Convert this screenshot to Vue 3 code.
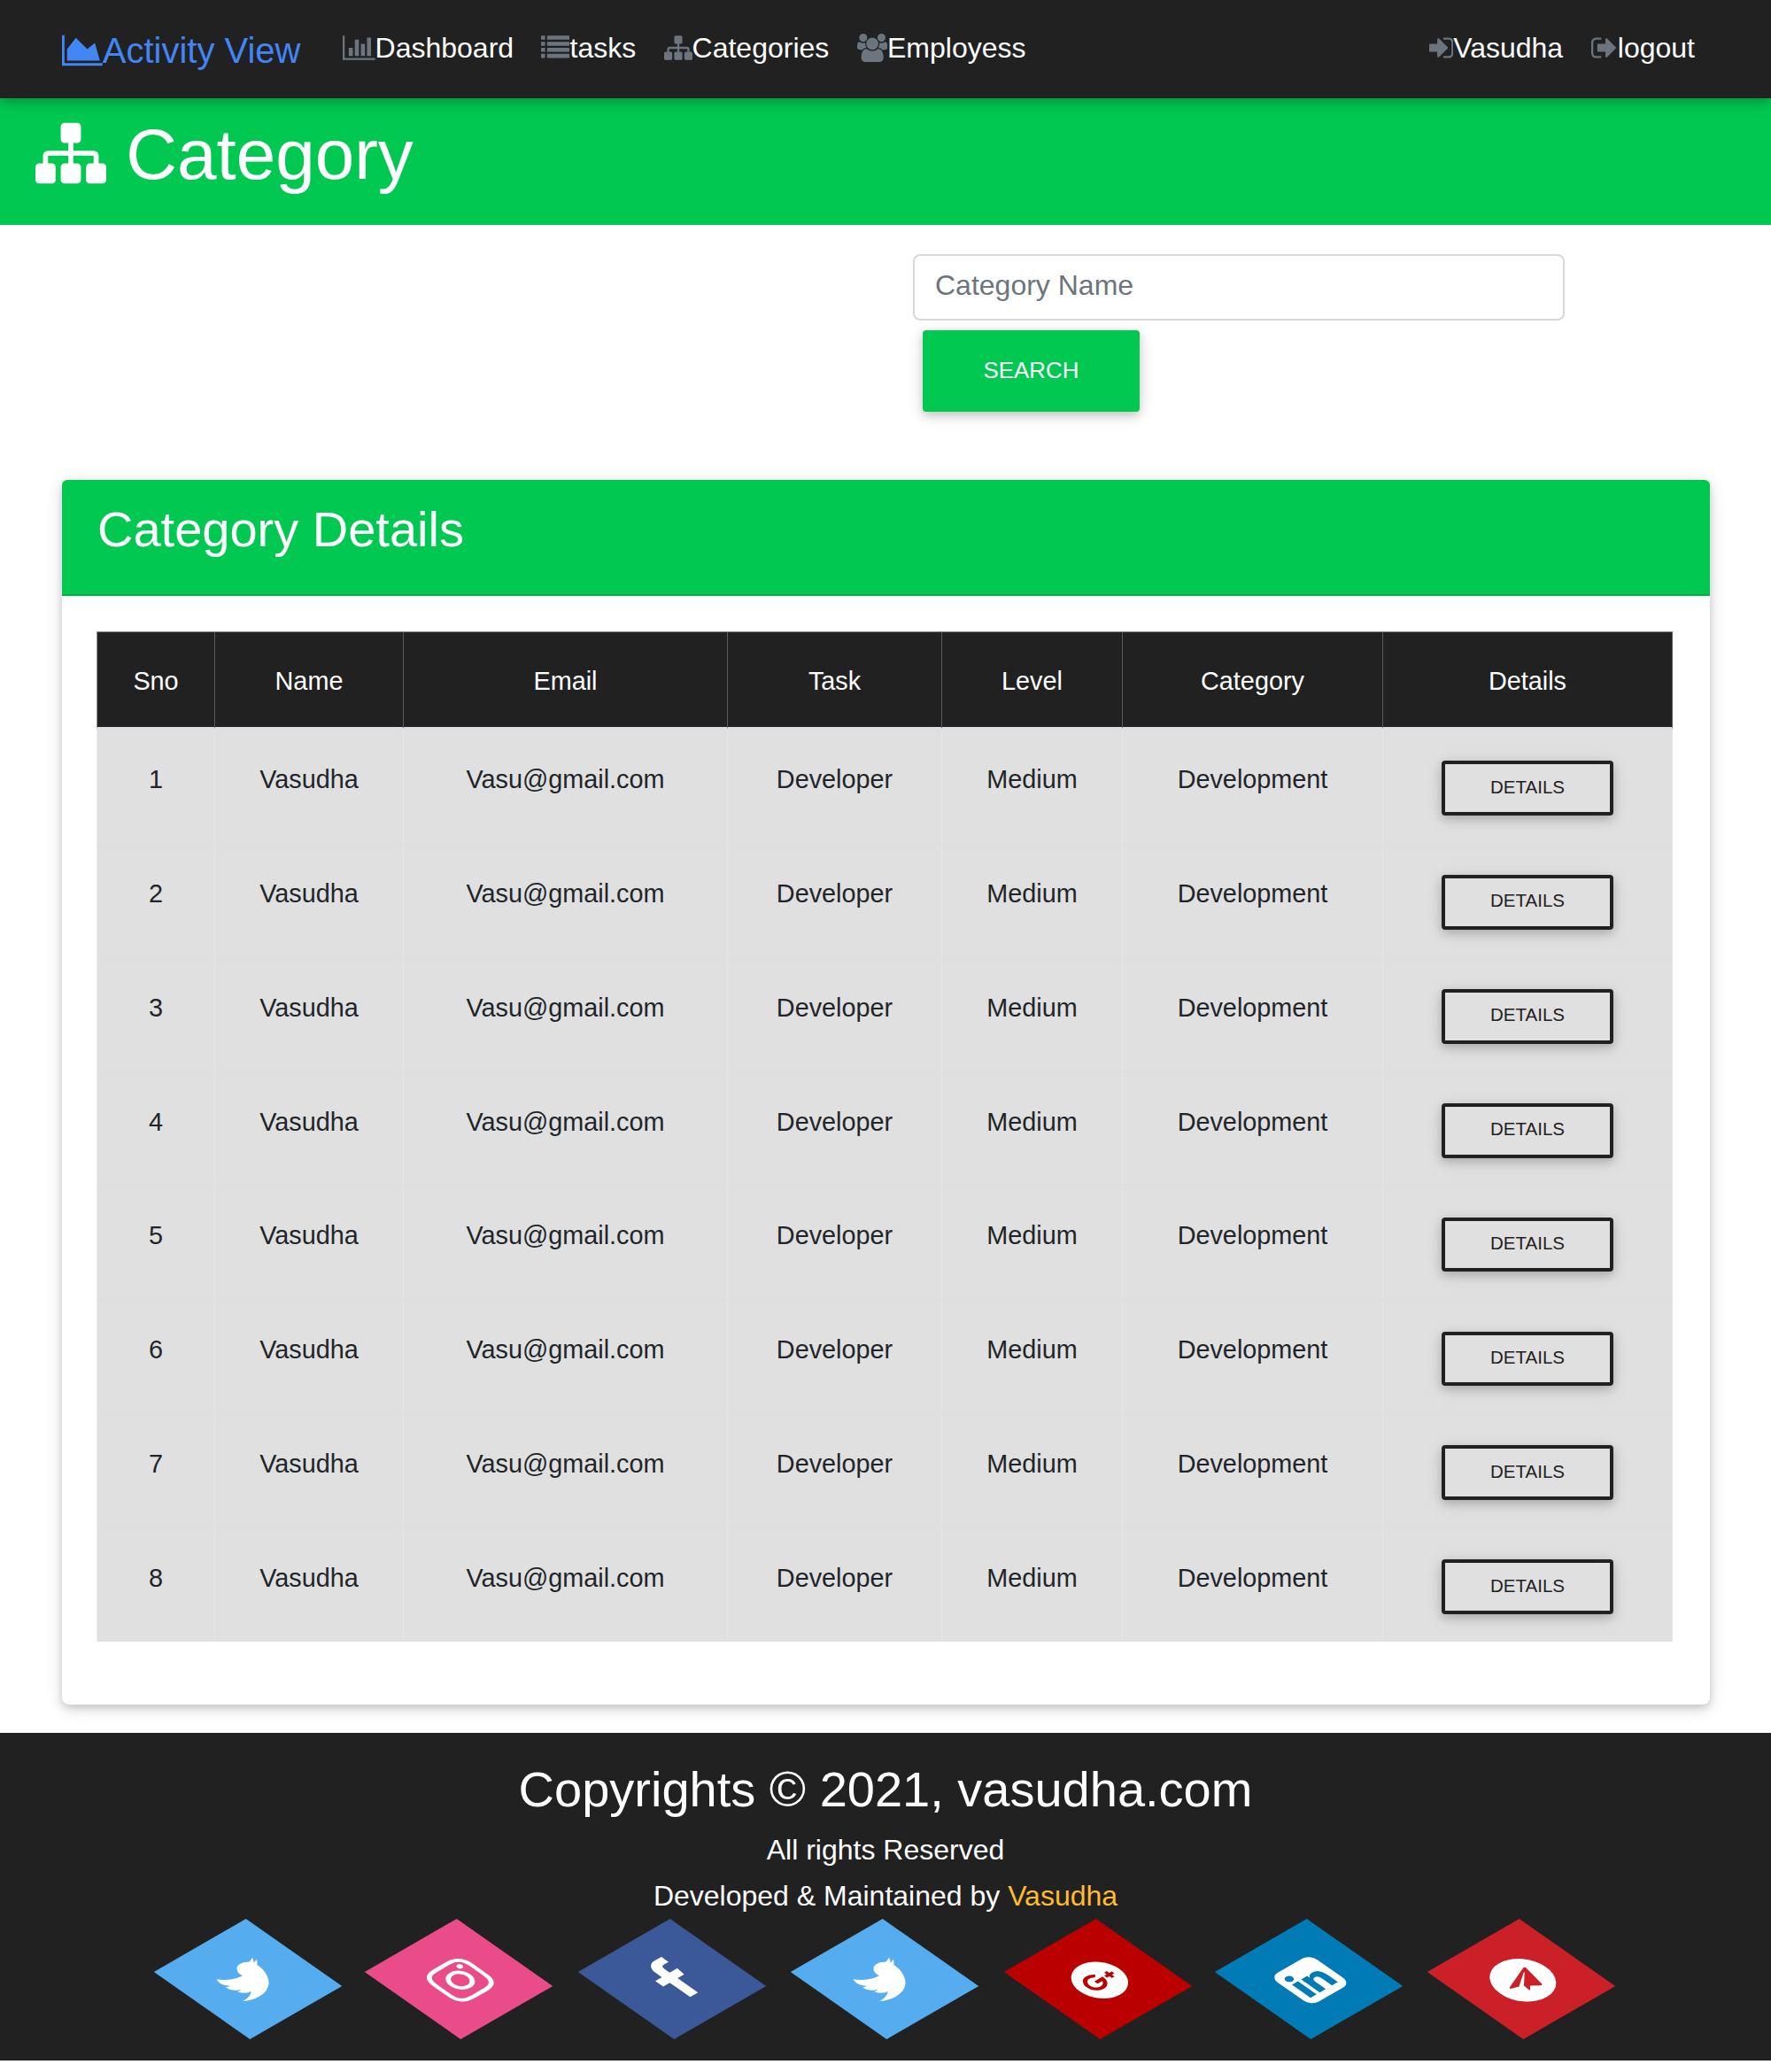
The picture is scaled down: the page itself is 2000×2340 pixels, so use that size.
<script setup>
const icons = {
  area: { w: 2048, d: 'M2048 1536v128h-2048v-1536h128v1408h1920zM1664 512l256 896h-1664v-576l448-576 576 576z' },
  bar: { w: 2048, d: 'M640 896v512h-256v-512h256zM1024 384v1024h-256v-1024h256zM2048 1536v128h-2048v-1536h128v1408h1920zM1408 640v768h-256v-768h256zM1792 256v1152h-256v-1152h256z' },
  list: {
    w: 1792,
    d: [128, 512, 896, 1280].map((y) => `M32 ${y}h192q32 0 32 32v192q0 32-32 32h-192q-32 0-32-32v-192q0-32 32-32zM416 ${y}h1344q32 0 32 32v192q0 32-32 32h-1344q-32 0-32-32v-192q0-32 32-32z`).join(''),
  },
  sitemap: { w: 1792, d: 'M1792 1248v320q0 40-28 68t-68 28h-320q-40 0-68-28t-28-68v-320q0-40 28-68t68-28h96v-192h-512v192h96q40 0 68 28t28 68v320q0 40-28 68t-68 28h-320q-40 0-68-28t-28-68v-320q0-40 28-68t68-28h96v-192h-512v192h96q40 0 68 28t28 68v320q0 40-28 68t-68 28h-320q-40 0-68-28t-28-68v-320q0-40 28-68t68-28h96v-192q0-52 38-90t90-38h512v-192h-96q-40 0-68-28t-28-68v-320q0-40 28-68t68-28h320q40 0 68 28t28 68v320q0 40-28 68t-68 28h-96v192h512q52 0 90 38t38 90v192h96q40 0 68 28t28 68z' },
  users: { w: 1920, d: 'M593 896q-162 5-265 128h-134q-82 0-138-40.5t-56-118.5q0-353 124-353 6 0 43.5 21t97.5 42.5 119 21.5q67 0 133-23-5 37-5 66 0 139 81 256zm1071 637q0 120-73 189.5t-194 69.5h-874q-121 0-194-69.5t-73-189.5q0-53 3.5-103.5t14-109 26.5-108.5 43-97.5 62-81 85.5-53.5 111.5-20q10 0 43 21.5t73 48 107 48 135 21.5 135-21.5 107-48 73-48 43-21.5q61 0 111.5 20t85.5 53.5 62 81 43 97.5 26.5 108.5 14 109 3.5 103.5zm-1024-1277q0 106-75 181t-181 75-181-75-75-181 75-181 181-75 181 75 75 181zm704 384q0 159-112.5 271.5t-271.5 112.5-271.5-112.5-112.5-271.5 112.5-271.5 271.5-112.5 271.5 112.5 112.5 271.5zm576 225q0 78-56 118.5t-138 40.5h-134q-103-123-265-128 81-117 81-256 0-29-5-66 66 23 133 23 59 0 119-21.5t97.5-42.5 43.5-21q124 0 124 353zm-128-609q0 106-75 181t-181 75-181-75-75-181 75-181 181-75 181 75 75 181z' },
  signin: { x: 128, w: 1536, d: 'M1312 896q0 26-19 45l-544 544q-19 19-45 19t-45-19-19-45v-288h-448q-26 0-45-19t-19-45v-384q0-26 19-45t45-19h448v-288q0-26 19-45t45-19 45 19l544 544q19 19 19 45zm352-352v704q0 119-84.5 203.5t-203.5 84.5h-320q-13 0-22.5-9.5t-9.5-22.5q0-4-1-20t-.5-26.5 3-23.5 10-19.5 20.5-6.5h320q66 0 113-47t47-113v-704q0-66-47-113t-113-47h-312l-11.5-1-11.5-3-8-5.5-7-9-2-13.5q0-4-1-20t-.5-26.5 3-23.5 10-19.5 20.5-6.5h320q119 0 203.5 84.5t84.5 203.5z' },
  signout: { x: 64, w: 1664, d: 'M704 1440q0 4 1 20t.5 26.5-3 23.5-10 19.5-20.5 6.5h-320q-119 0-203.5-84.5t-84.5-203.5v-704q0-119 84.5-203.5t203.5-84.5h320q13 0 22.5 9.5t9.5 22.5q0 4 1 20t.5 26.5-3 23.5-10 19.5-20.5 6.5h-320q-66 0-113 47t-47 113v704q0 66 47 113t113 47h312l11.5 1 11.5 3 8 5.5 7 9 2 13.5zm928-544q0 26-19 45l-544 544q-19 19-45 19t-45-19-19-45v-288h-448q-26 0-45-19t-19-45v-384q0-26 19-45t45-19h448v-288q0-26 19-45t45-19 45 19l544 544q19 19 19 45z' },
}
const box = (name) => `${icons[name].x || 0} 0 ${icons[name].w} 1792`

const twitter = 'M1684 408q-67 98-162 167 1 14 1 42 0 130-38 259.5t-115.5 248.5-184.5 210.5-258 146-323 54.5q-271 0-496-145 35 4 78 4 225 0 401-138-105-2-188-64.5t-114-159.5q33 5 61 5 43 0 85-11-112-23-185.5-111.5t-73.5-205.5v-4q68 38 146 41-66-44-105-115t-39-154q0-88 44-163 121 149 294.5 238.5t371.5 99.5q-8-38-8-74 0-134 94.5-228.5t228.5-94.5q140 0 236 102 109-21 205-78-37 115-142 178 93-10 186-50z'
const instagram = 'M1152 896q0-106-75-181t-181-75-181 75-75 181 75 181 181 75 181-75 75-181zm138 0q0 164-115 279t-279 115-279-115-115-279 115-279 279-115 279 115 115 279zm108-410q0 38-27 65t-65 27-65-27-27-65 27-65 65-27 65 27 27 65zm-502-220q-7 0-76.5-.5t-105.5 0-96.5 3-103 10-71.5 18.5q-50 20-88 58t-58 88q-11 29-18.5 71.5t-10 103-3 96.5 0 105.5.5 76.5-.5 76.5 0 105.5 3 96.5 10 103 18.5 71.5q20 50 58 88t88 58q29 11 71.5 18.5t103 10 96.5 3 105.5 0 76.5-.5 76.5.5 105.5 0 96.5-3 103-10 71.5-18.5q50-20 88-58t58-88q11-29 18.5-71.5t10-103 3-96.5 0-105.5-.5-76.5.5-76.5 0-105.5-3-96.5-10-103-18.5-71.5q-20-50-58-88t-88-58q-29-11-71.5-18.5t-103-10-96.5-3-105.5 0-76.5.5zm768 630q0 229-5 317-10 208-124 322t-322 124q-88 5-317 5t-317-5q-208-10-322-124t-124-322q-5-88-5-317t5-317q10-208 124-322t322-124q88-5 317-5t317 5q208 10 322 124t124 322q5 88 5 317z'
const facebook = 'M1343 12v264h-157q-86 0-116 36t-30 108v189h293l-39 296h-254v759h-306v-759h-255v-296h255v-218q0-186 104-288.5t277-102.5q147 0 228 12z'
const linkedin = 'M365 1414h231v-694h-231v694zm246-908q-1-52-36-86t-93-34-94.5 34-36.5 86q0 51 35.5 85.5t92.5 34.5h1q59 0 95-34.5t36-85.5zm585 908h231v-398q0-154-73-233t-193-79q-136 0-209 117h2v-101h-231q3 66 0 694h231v-388q0-38 7-56 15-35 45-59.5t74-24.5q116 0 116 157v371zm468-998v960q0 119-84.5 203.5t-203.5 84.5h-960q-119 0-203.5-84.5t-84.5-203.5v-960q0-119 84.5-203.5t203.5-84.5h960q119 0 203.5 84.5t84.5 203.5z'
const plane = 'M1189 1307l147-693q9-44-10.5-63t-51.5-7l-864 333q-29 11-39.5 25t-2.5 26.5 32 19.5l221 69 513-323q21-14 32-6 7 5-4 15l-415 375-16 228q23 0 45-22l108-104 224 165q64 36 81-38z'

const links = [
  { icon: 'bar', text: 'Dashboard' },
  { icon: 'list', text: 'tasks' },
  { icon: 'sitemap', text: 'Categories' },
  { icon: 'users', text: 'Employess' },
]
const account = [
  { icon: 'signin', text: 'Vasudha' },
  { icon: 'signout', text: 'logout' },
]
const heads = ['Sno', 'Name', 'Email', 'Task', 'Level', 'Category', 'Details']
const rows = Array.from({ length: 8 }, (_, i) => [i + 1, 'Vasudha', 'Vasu@gmail.com', 'Developer', 'Medium', 'Development'])
const social = [
  { name: 'twitter', d: twitter },
  { name: 'instagram', d: instagram },
  { name: 'facebook', d: facebook },
  { name: 'twitter', d: twitter },
  { name: 'google' },
  { name: 'linkedin', d: linkedin },
  { name: 'telegram' },
]
</script>

<template>
  <div class="page">
    <nav class="navbar">
      <a class="brand"><svg class="fa" :viewBox="box('area')"><path :d="icons.area.d" /></svg>Activity View</a>
      <ul class="links">
        <li v-for="l in links" :key="l.text"><svg class="fa" :viewBox="box(l.icon)"><path :d="icons[l.icon].d" /></svg>{{ l.text }}</li>
      </ul>
      <ul class="links account">
        <li v-for="l in account" :key="l.text"><svg class="fa" :viewBox="box(l.icon)"><path :d="icons[l.icon].d" /></svg>{{ l.text }}</li>
      </ul>
    </nav>

    <header class="banner">
      <h1><svg class="fa" :viewBox="box('sitemap')"><path :d="icons.sitemap.d" /></svg> Category</h1>
    </header>

    <form class="search" @submit.prevent>
      <input type="text" placeholder="Category Name" />
      <button class="btn-search">SEARCH</button>
    </form>

    <section class="card">
      <div class="card-head"><h3>Category Details</h3></div>
      <div class="card-body">
        <table>
          <colgroup>
            <col class="c1" /><col class="c2" /><col class="c3" /><col class="c4" /><col class="c5" /><col class="c6" /><col class="c7" />
          </colgroup>
          <thead>
            <tr><th v-for="h in heads" :key="h">{{ h }}</th></tr>
          </thead>
          <tbody>
            <tr v-for="r in rows" :key="r[0]">
              <td v-for="(c, i) in r" :key="i">{{ c }}</td>
              <td class="action"><button class="btn-details">DETAILS</button></td>
            </tr>
          </tbody>
        </table>
      </div>
    </section>

    <footer class="footer">
      <h3>Copyrights © 2021, vasudha.com</h3>
      <p>All rights Reserved</p>
      <p>Developed &amp; Maintained by <a>Vasudha</a></p>
      <ul class="social">
        <li v-for="(s, i) in social" :key="i" :class="s.name">
          <svg viewBox="0 0 1792 1792">
            <path v-if="s.d" :d="s.d" />
            <template v-else-if="s.name === 'google'">
              <circle cx="896" cy="896" r="768" />
              <path class="mark" d="M926 700A270 270 0 1 0 1000 905H745" />
              <path class="plus" d="M1275 750v290M1130 895h290" />
            </template>
            <template v-else>
              <circle cx="896" cy="896" r="896" />
              <path class="cut" :d="plane" />
            </template>
          </svg>
        </li>
      </ul>
    </footer>
  </div>
</template>

<style>
body {
  background: #fff;
}
</style>

<style scoped>
* {
  box-sizing: border-box;
}
.page {
  width: 2000px;
  height: 2340px;
  overflow: hidden;
  font-family: "Liberation Sans", Arial, sans-serif;
  font-size: 32px;
  line-height: 48px;
  color: #212529;
}
h1, h3, p, ul {
  margin: 0;
  padding: 0;
  font-weight: 400;
  list-style: none;
}
.fa {
  height: 1em;
  width: auto;
  vertical-align: -0.143em;
  fill: currentColor;
}
.navbar {
  position: relative;
  display: flex;
  align-items: flex-start;
  height: 111px;
  padding: 0 70px;
  background: #212121;
  box-shadow: 0 4px 10px rgba(0, 0, 0, 0.16), 0 4px 20px rgba(0, 0, 0, 0.12);
}
.brand {
  margin: 27px 47.5px 0 0;
  font-size: 40px;
  line-height: 60px;
  color: #4285f4;
  white-space: nowrap;
}
.links {
  display: flex;
  gap: 31.4px;
  padding-top: 30px;
  color: #fff;
  white-space: nowrap;
}
.links .fa {
  fill: #6c757d;
}
.account {
  gap: 32px;
  margin-left: auto;
  margin-right: 16px;
}
.banner {
  height: 142.6px;
  padding: 16px 40px 0;
  background: #00c851;
  color: #fff;
}
.banner h1 {
  font-size: 80px;
  line-height: 96px;
}
.search {
  display: flex;
  flex-direction: column;
  align-items: flex-start;
  height: 288.7px;
  padding: 33.4px 0 0 1031px;
}
.search input {
  width: 736px;
  height: 74.6px;
  padding: 0 23px 3px;
  border: 2px solid #d3d9de;
  border-radius: 8px;
  font: inherit;
  background: #fff;
}
.search input::placeholder {
  color: #6c757d;
  opacity: 1;
}
.btn-search {
  width: 245px;
  height: 92.4px;
  margin: 11.4px 0 0 11px;
  padding: 0 0 1px;
  border: 0;
  border-radius: 4px;
  background: #00c851;
  color: #fff;
  font: 25.9px "Liberation Sans", Arial, sans-serif;
  box-shadow: 0 4px 10px rgba(0, 0, 0, 0.16), 0 4px 20px rgba(0, 0, 0, 0.12);
}
.card {
  width: 1861px;
  height: 1382.6px;
  margin: 0 0 32.3px 70px;
  border-radius: 8px;
  background: #fff;
  box-shadow: 0 4px 10px rgba(0, 0, 0, 0.16), 0 4px 20px rgba(0, 0, 0, 0.12);
}
.card-head {
  height: 130.7px;
  padding: 22px 40px 0;
  border-bottom: 2px solid #00af47;
  border-radius: 6px 6px 0 0;
  background: #00c851;
  color: #fff;
}
.card-head h3 {
  font-size: 56px;
  line-height: 67px;
}
.card-body {
  padding: 39.7px 39px 0;
}
table {
  width: 1780px;
  table-layout: fixed;
  border-collapse: separate;
  border-spacing: 0;
  font-size: 28.8px;
  line-height: 43.2px;
  text-align: center;
}
.c1 { width: 134px; }
.c2 { width: 213px; }
.c3 { width: 366px; }
.c4 { width: 242px; }
.c5 { width: 204px; }
.c6 { width: 294px; }
th {
  height: 110.4px;
  padding: 34px 0 0;
  border-top: 1px solid #8e9194;
  border-right: 1px solid #585b5e;
  border-bottom: 2px solid #dce0e4;
  background: #212121;
  background-clip: padding-box;
  color: #fff;
  font-weight: 400;
  vertical-align: top;
}
th:first-child {
  border-left: 1px solid #8e9194;
}
td {
  height: 128.86px;
  padding: 33.9px 0 0;
  border-top: 2px solid #dddfe1;
  border-right: 1px solid #e6e6e6;
  background: #e0e0e0;
  vertical-align: top;
}
td:first-child {
  border-left: 1px solid #eceef0;
}
.action {
  padding-top: 34.2px;
}
.btn-details {
  display: block;
  width: 194px;
  height: 61.7px;
  margin: 0 auto;
  padding: 0 0 3px;
  border: 4px solid #212121;
  border-radius: 4px;
  background: transparent;
  color: #212121;
  font: 20.5px "Liberation Sans", Arial, sans-serif;
  box-shadow: 0 4px 10px rgba(0, 0, 0, 0.16), 0 4px 20px rgba(0, 0, 0, 0.12);
}
.footer {
  position: relative;
  height: 369.6px;
  padding-top: 30px;
  background: #212121;
  color: #fff;
  text-align: center;
}
.footer h3 {
  margin-bottom: 11px;
  font-size: 56px;
  line-height: 67px;
}
.footer p {
  height: 52px;
}
.footer a {
  color: #ffbb33;
}
.social {
  display: flex;
  gap: 120.4px;
  padding: 5.5px 0 0 220px;
}
.social li {
  display: flex;
  align-items: center;
  justify-content: center;
  width: 120px;
  height: 120px;
  flex: none;
  transform: rotate(-30deg) skew(25deg);
}
.social .instagram,
.social .linkedin {
  margin-left: -2px;
}
.social svg {
  width: 60px;
  height: 60px;
  margin: 3px 0 0;
  fill: #fff;
}
.twitter { background: #55acee; }
.instagram { background: #ea4c89; }
.facebook { background: #3b5998; }
.google { background: #bb0000; }
.linkedin { background: #007bb6; }
.telegram { background: #cb2027; }
.social .mark,
.social .plus {
  fill: none;
  stroke: #bb0000;
  stroke-width: 120;
}
.social .plus {
  stroke-width: 100;
}
.social .cut {
  fill: #cb2027;
}
</style>
